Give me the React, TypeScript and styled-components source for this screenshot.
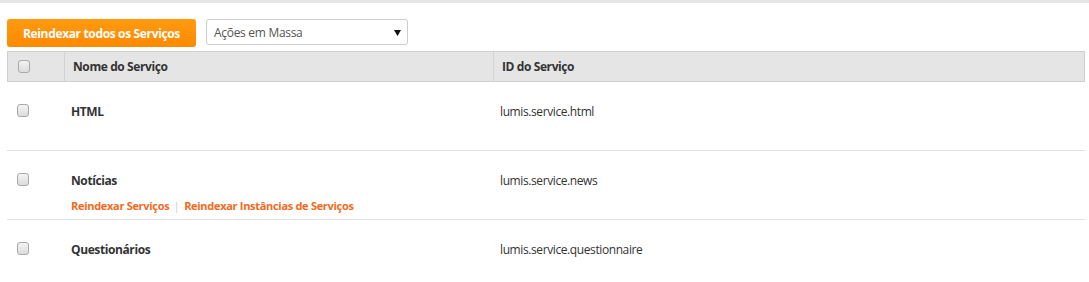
import styled, { createGlobalStyle } from 'styled-components';

const GlobalStyle = createGlobalStyle`
  html, body {
    margin: 0;
    padding: 0;
    background: #fff;
    font-family: "Open Sans", "Noto Sans", sans-serif;
    font-size: 12px;
    color: #333;
  }
`;

const TopBar = styled.div`
  height: 3px;
  background-color: #e6e6e6;
`;

const Page = styled.div`
  padding: 16px 4px 0 7px;
`;

const Toolbar = styled.div`
  display: flex;
  align-items: flex-start;
  gap: 10px;
  margin-bottom: 4px;
`;

const Button = styled.button`
  height: 28px;
  width: 189px;
  padding: 0;
  border: none;
  border-radius: 3px;
  background: linear-gradient(#ff9a10, #ff8a00);
  color: #fff;
  font-family: inherit;
  font-size: 12px;
  font-weight: 700;
  letter-spacing: -0.35px;
  cursor: pointer;
`;

const SelectBox = styled.div`
  box-sizing: border-box;
  width: 202px;
  height: 26px;
  display: flex;
  align-items: center;
  justify-content: space-between;
  padding: 0 6px 0 7px;
  border: 1px solid #ccc;
  border-radius: 3px;
  color: #555;
  letter-spacing: -0.3px;
`;

const Arrow = styled.svg`
  width: 7px;
  height: 7px;
  fill: #111;
`;

const Table = styled.div`
  width: 1078px;
`;

const Row = styled.div<{ $header?: boolean }>`
  display: grid;
  grid-template-columns: 56px 429px 1fr;
  box-sizing: border-box;
  height: ${(p) => (p.$header ? '31px' : '69px')};
  background-color: ${(p) => (p.$header ? '#e5e5e5' : '#fff')};
  border: ${(p) => (p.$header ? '1px solid #cfcfcf' : 'none')};
  border-bottom: 1px solid ${(p) => (p.$header ? '#cfcfcf' : '#e0e0e0')};
  font-weight: ${(p) => (p.$header ? 700 : 400)};
`;

const Cell = styled.div<{ $header?: boolean; $divider?: boolean }>`
  display: flex;
  flex-direction: column;
  justify-content: ${(p) => (p.$header ? 'center' : 'flex-start')};
  padding: ${(p) => (p.$header ? '0 8px' : '21px 8px 0')};
  border-left: ${(p) => (p.$divider ? '1px solid #d4d4d4' : 'none')};
  letter-spacing: -0.4px;
`;

const CheckCell = styled.div<{ $header?: boolean }>`
  display: flex;
  align-items: ${(p) => (p.$header ? 'center' : 'flex-start')};
  padding: ${(p) => (p.$header ? '0 0 0 10px' : '22px 0 0 10px')};
`;

const Checkbox = styled.span`
  box-sizing: border-box;
  width: 12px;
  height: 13px;
  border: 1px solid #a9a9a9;
  border-radius: 3px;
  background: linear-gradient(#f4f4f4, #dcdcdc);
`;

const Name = styled.div`
  font-weight: 700;
  line-height: 18px;
`;

const ServiceId = styled.div`
  line-height: 18px;
  color: #333;
`;

const Links = styled.div`
  display: flex;
  align-items: center;
  margin-top: 8px;
  font-size: 11px;
  font-weight: 700;
  color: #f26a21;
  letter-spacing: -0.3px;
`;

const Sep = styled.span`
  color: #ccc;
  font-weight: 400;
  margin: 0 5px 0 4px;
`;

const services = [
  { name: 'HTML', id: 'lumis.service.html', links: [] as string[] },
  {
    name: 'Notícias',
    id: 'lumis.service.news',
    links: ['Reindexar Serviços', 'Reindexar Instâncias de Serviços'],
  },
  { name: 'Questionários', id: 'lumis.service.questionnaire', links: [] as string[] },
];

export default function App() {
  return (
    <>
      <GlobalStyle />
      <TopBar />
      <Page>
        <Toolbar>
          <Button>Reindexar todos os Serviços</Button>
          <SelectBox>
            <span>Ações em Massa</span>
            <Arrow viewBox="0 0 8 8">
              <path d="M0 1 L8 1 L4 8 Z" />
            </Arrow>
          </SelectBox>
        </Toolbar>
        <Table>
          <Row $header>
            <CheckCell $header>
              <Checkbox />
            </CheckCell>
            <Cell $header $divider>
              Nome do Serviço
            </Cell>
            <Cell $header $divider>
              ID do Serviço
            </Cell>
          </Row>
          {services.map((s) => (
            <Row key={s.id}>
              <CheckCell>
                <Checkbox />
              </CheckCell>
              <Cell>
                <Name>{s.name}</Name>
                {s.links.length > 0 && (
                  <Links>
                    {s.links.map((l, i) => (
                      <span key={l}>
                        {i > 0 && <Sep>|</Sep>}
                        {l}
                      </span>
                    ))}
                  </Links>
                )}
              </Cell>
              <Cell>
                <ServiceId>{s.id}</ServiceId>
              </Cell>
            </Row>
          ))}
        </Table>
      </Page>
    </>
  );
}
